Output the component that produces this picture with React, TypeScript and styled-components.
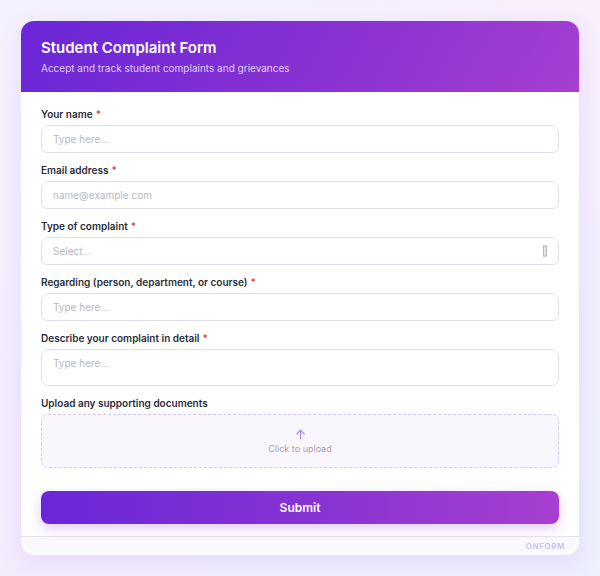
import styled, { createGlobalStyle } from "styled-components";

const GlobalStyle = createGlobalStyle`
  * { box-sizing: border-box; }
  html, body { margin: 0; padding: 0; }
  body {
    font-family: Inter, "Noto Sans", sans-serif;
    background: linear-gradient(135deg, #f5f0fd 0%, #f2effc 50%, #eef0fd 100%);
    min-height: 576px;
  }
`;

const Page = styled.div`
  padding: 20px;
  min-height: 576px;
  background:
    radial-gradient(circle at 100% 0%, #f9eefc 0%, rgba(249, 238, 252, 0) 40%),
    radial-gradient(circle at 0% 100%, #f4ecfd 0%, rgba(244, 236, 253, 0) 40%);
`;

const Card = styled.div`
  width: 560px;
  background: #fff;
  border: 1px solid #ece6fa;
  border-radius: 14px;
  overflow: hidden;
  box-shadow: 0 8px 24px rgba(124, 58, 237, 0.1);
`;

const Header = styled.div`
  height: 71px;
  padding: 17px 20px 0;
  background: linear-gradient(120deg, #6a26d8 0%, #8832d2 55%, #a63fd1 100%);
  color: #fff;
`;

const Title = styled.h1`
  margin: 0;
  font-size: 15px;
  font-weight: 600;
  line-height: 20px;
`;

const Subtitle = styled.p`
  margin: 3px 0 0;
  font-size: 10px;
  line-height: 14px;
  color: rgba(255, 255, 255, 0.78);
`;

const Body = styled.form`
  display: flex;
  flex-direction: column;
  gap: 10px;
  padding: 15px 20px 12px;
`;

const Field = styled.div`
  display: flex;
  flex-direction: column;
  gap: 4px;
`;

const Label = styled.label`
  font-size: 10px;
  font-weight: 600;
  line-height: 14px;
  color: #2a2d3a;
`;

const Req = styled.span`
  color: #ef4444;
  margin-left: 3px;
`;

const Input = styled.div<{ $tall?: boolean }>`
  position: relative;
  display: flex;
  align-items: ${(p) => (p.$tall ? "flex-start" : "center")};
  height: ${(p) => (p.$tall ? "37px" : "28px")};
  padding: ${(p) => (p.$tall ? "7px 11px" : "0 11px")};
  border: 1.5px solid #e1dfe8;
  border-radius: 7px;
  font-size: 10px;
  color: #b8b7c3;
  background: #fff;
`;

const SelectMark = styled.span`
  position: absolute;
  right: 11px;
  top: 50%;
  transform: translateY(-50%);
  width: 4px;
  height: 11px;
  border: 1px solid #b9b9c2;
  background: #e6e6ea;
`;

const Upload = styled.div`
  height: 54px;
  border: 1.5px dashed #d6c6f6;
  border-radius: 7px;
  background: #faf6fe;
  display: flex;
  flex-direction: column;
  align-items: center;
  justify-content: center;
  gap: 2px;
  font-size: 9px;
  color: #a4a2b0;
`;

const Submit = styled.button`
  margin-top: 13px;
  height: 33px;
  border: none;
  border-radius: 8px;
  background: linear-gradient(90deg, #6a26d8 0%, #8834d3 55%, #a73fd0 100%);
  color: #fff;
  font-family: inherit;
  font-size: 12px;
  font-weight: 600;
  box-shadow: 0 4px 12px rgba(139, 62, 220, 0.28);
`;

const Footer = styled.div`
  height: 19px;
  border-top: 1px solid #e6e2ee;
  background: #faf9fe;
  display: flex;
  align-items: center;
  justify-content: flex-end;
  padding: 0 14px 1px 0;
  font-size: 8px;
  font-weight: 600;
  letter-spacing: 0.6px;
  color: #c8bdf5;
`;

const fields = [
  { label: "Your name", placeholder: "Type here..." },
  { label: "Email address", placeholder: "name@example.com" },
  { label: "Type of complaint", placeholder: "Select...", select: true },
  { label: "Regarding (person, department, or course)", placeholder: "Type here..." },
  { label: "Describe your complaint in detail", placeholder: "Type here...", tall: true },
];

export default function App() {
  return (
    <>
      <GlobalStyle />
      <Page>
        <Card>
          <Header>
            <Title>Student Complaint Form</Title>
            <Subtitle>Accept and track student complaints and grievances</Subtitle>
          </Header>
          <Body onSubmit={(e) => e.preventDefault()}>
            {fields.map((f) => (
              <Field key={f.label}>
                <Label>
                  {f.label}
                  <Req>*</Req>
                </Label>
                <Input $tall={f.tall}>
                  {f.placeholder}
                  {f.select && <SelectMark />}
                </Input>
              </Field>
            ))}
            <Field>
              <Label>Upload any supporting documents</Label>
              <Upload>
                <svg width="13" height="13" viewBox="0 0 24 24" fill="none" stroke="#a78bfa" strokeWidth="2.2" strokeLinecap="round" strokeLinejoin="round">
                  <path d="M12 20V4" />
                  <path d="M5 11l7-7 7 7" />
                </svg>
                Click to upload
              </Upload>
            </Field>
            <Submit type="submit">Submit</Submit>
          </Body>
          <Footer>ONFORM</Footer>
        </Card>
      </Page>
    </>
  );
}
